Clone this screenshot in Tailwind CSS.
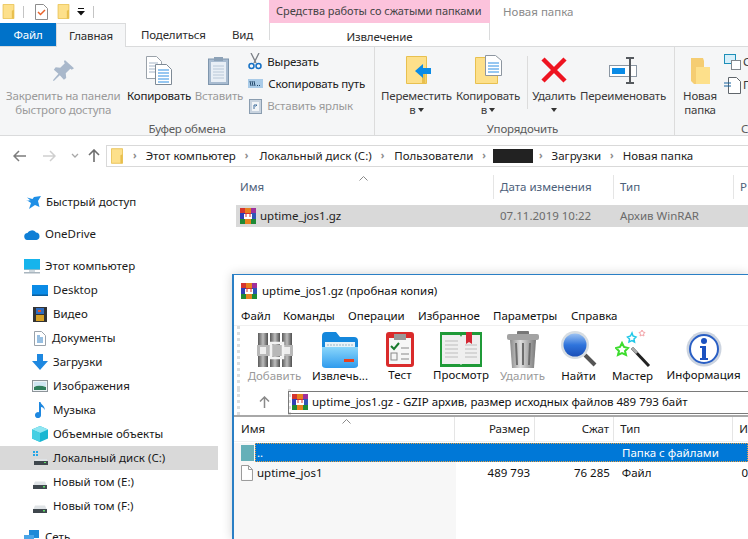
<!DOCTYPE html>
<html lang="ru">
<head>
<meta charset="UTF-8">
<title>Новая папка</title>
<script src="https://cdn.jsdelivr.net/npm/@tailwindcss/browser@4"></script>
</head>
<body class="bg-white">
<svg width="0" height="0" class="absolute">
  <defs>
    <linearGradient id="book" x1="0" x2="1" y1="0" y2="0"><stop offset="0" stop-color="#5a5a5a"/><stop offset=".5" stop-color="#bdbdbd"/><stop offset="1" stop-color="#4e4e4e"/></linearGradient>
    <linearGradient id="blue" x1="0" x2="0" y1="0" y2="1"><stop offset="0" stop-color="#8ad6fb"/><stop offset="1" stop-color="#2f9bed"/></linearGradient>
    <linearGradient id="lens" x1="0" x2="0" y1="0" y2="1"><stop offset="0" stop-color="#9cc2f2"/><stop offset=".5" stop-color="#2f74dc"/><stop offset="1" stop-color="#1a4fb8"/></linearGradient>
    <linearGradient id="can" x1="0" x2="1" y1="0" y2="0"><stop offset="0" stop-color="#8a8a8a"/><stop offset=".4" stop-color="#dedede"/><stop offset="1" stop-color="#7a7a7a"/></linearGradient>
    <symbol id="folder" viewBox="0 0 14 18"><path d="M.5.5h13v17H.5z" fill="#fde08b" stroke="#e8c04f"/><path d="M11 8l2.500-1v10.500H11z" fill="#e8bf4d"/></symbol>
    <symbol id="rar" viewBox="0 0 16 16">
      <rect width="5" height="5" fill="#d6352f"/><rect x="5" width="6" height="5" fill="#e8811f"/><rect x="11" width="5" height="5" fill="#a02f9a"/>
      <rect y="5" width="5" height="6" fill="#2f3fb5"/><rect x="5" y="5" width="6" height="6" fill="#d8322e"/><rect x="11" y="5" width="5" height="6" fill="#2f55b5"/>
      <path d="M4 6h1.500v3h1V6h3v3h1V6H12v5H4z" fill="#fff"/>
      <rect y="11" width="5" height="5" fill="#1f8a35"/><rect x="5" y="11" width="6" height="5" fill="#e8811f"/><rect x="11" y="11" width="5" height="5" fill="#1f8a35"/>
    </symbol>
    <symbol id="drive" viewBox="0 0 14 8"><path d="M2 .5h10L14 5v3H0V5z" fill="#dfe3e6"/><rect y="4" width="14" height="4" fill="#3f474d"/><rect x="10" y="5" width="2" height="1.500" fill="#5fe06a"/></symbol>
  </defs>
</svg>

<div class="relative w-[748px] h-[539px] overflow-hidden bg-white font-['Noto_Sans',sans-serif] text-[11.5px] text-[#1f1f1f]">

  <!-- quick access bar -->
  <div class="flex h-[23px]">
    <div class="flex items-center w-[269px] pl-[2px]">
      <svg class="w-[13px] h-[15px]"><use href="#folder"/></svg>
      <div class="ml-[8px] w-px h-[12px] bg-[#c4c4c4]"></div>
      <svg class="ml-[11px] w-[13px] h-[16px]" viewBox="0 0 13 16"><path d="M.5.500h8l4 4v11H.5z" fill="#fff" stroke="#8d8d8d"/><path d="M3 8l2.500 2.500L10 6" fill="none" stroke="#e8622a" stroke-width="1.500"/></svg>
      <svg class="ml-[9px] w-[13px] h-[15px]"><use href="#folder"/></svg>
      <svg class="ml-[7px] w-[8px] h-[8px]" viewBox="0 0 8 8"><path d="M1 0h6v1H1zM0 3h8L4 7.500z" fill="#111"/></svg>
      <div class="ml-[8px] w-px h-[12px] bg-[#c4c4c4]"></div>
    </div>
    <div class="w-[221px] h-full bg-[#fcc3dc] pl-[7px] flex items-center text-[#444] whitespace-nowrap text-[11px] tracking-[-0.03px]">Средства работы со сжатыми папками</div>
    <div class="pl-[13px] flex items-center text-[#8a8a8a]">Новая папка</div>
  </div>

  <!-- ribbon tabs -->
  <div class="flex h-[23px] text-[#2c2c2c] tracking-[-0.15px]">
    <div class="w-[56px] bg-[#0072c9] text-white flex items-center justify-center">Файл</div>
    <div class="w-[70px] h-[24px] bg-[#f5f6f7] border border-b-0 border-[#dadbdc] flex items-center justify-center z-10">Главная</div>
    <div class="pl-[15px] w-[106px] flex items-center">Поделиться</div>
    <div class="w-[37px] flex items-center">Вид</div>
    <div class="w-[221px] h-[17px] border-x border-[#dadbdc] flex items-center justify-center pt-[11px]">Извлечение</div>
  </div>

  <!-- ribbon -->
  <div class="flex h-[90px] bg-[#f5f6f7] border-y border-[#dadbdc] text-[#3a3a3a] tracking-[-0.2px]">
    <div class="w-[375px] border-r border-[#dcdcdc] flex flex-col">
      <div class="flex h-[75px]">
        <div class="w-[127px] flex flex-col items-center text-[#9a9a9a] leading-[14px]">
          <svg class="mt-[13px] w-[22px] h-[22px] mb-[7px]" viewBox="0 0 24 24"><path d="M14 0l10 9-2.500 1.500-1.500-1-5 5 .5 5-2.500 2-4.500-5L2 23l-1-1 6-7-5-4.500 2-2.500 5 .5 5-5-1-1.500z" fill="#a9b8cb"/></svg>
          <div class="text-center">Закрепить на панели<br>быстрого доступа</div>
        </div>
        <div class="w-[65px] flex flex-col items-center leading-[14px] text-[#202020]">
          <svg class="mt-[9px] w-[26px] h-[29px] mb-[4px]" viewBox="0 0 26 29"><path d="M.5.500h10l5 5v17H.5z" fill="#fff" stroke="#9aa2aa"/><path d="M3 7h9M3 10h9M3 13h9M3 16h9" stroke="#a5b5c8"/><path d="M9.500 8.500h11l5 5v15h-16z" fill="#fff" stroke="#7e8a96"/><path d="M12 14h11M12 17h11M12 20h11M12 23h11M12 26h11" stroke="#2f8fe3" stroke-width="1.200"/></svg>
          <div>Копировать</div>
        </div>
        <div class="w-[52px] flex flex-col items-center leading-[14px] text-[#9a9a9a] pl-[3px]">
          <svg class="mt-[9px] w-[21px] h-[29px] mb-[4px]" viewBox="0 0 21 29"><rect x=".5" y="3" width="20" height="25.500" fill="#a8bbd0" stroke="#7f96ad"/><rect x="3" y="6" width="15" height="20" fill="#e9eff6"/><path d="M5 10h11M5 13h11M5 16h11M5 19h11M5 22h11" stroke="#b9c8d8"/><rect x="6" y="1" width="9" height="4" fill="#8da2b7"/></svg>
          <div>Вставить</div>
        </div>
        <div class="pl-[5px] pt-[7px] flex flex-col gap-[7px] leading-[15px] w-[131px]">
          <div class="flex items-center gap-[5px] h-[15px] text-[#202020]">
            <svg class="w-[14px] h-[17px]" viewBox="0 0 14 17"><path d="M3 0l5 10M11 0L6 10" stroke="#7a7f85" stroke-width="1.300"/><circle cx="3.500" cy="13" r="2.500" fill="none" stroke="#1470c4" stroke-width="1.500"/><circle cx="10.500" cy="13" r="2.500" fill="none" stroke="#1470c4" stroke-width="1.500"/></svg>
            Вырезать</div>
          <div class="flex items-center gap-[5px] h-[15px] text-[#202020]">
            <svg class="w-[15px] h-[9px]" viewBox="0 0 15 9"><rect width="15" height="9" fill="#a9cbe8"/><path d="M2 2l1 5M4 2l1 5M6 2l1 5" stroke="#24496b"/><path d="M9 6.500h1M11 6.500h1" stroke="#24496b"/></svg>
            Скопировать путь</div>
          <div class="flex items-center gap-[5px] h-[15px] text-[#9a9a9a] pl-px">
            <svg class="w-[13px] h-[16px]" viewBox="0 0 13 16"><rect x=".5" y="1.500" width="12" height="14" fill="#c8d3df" stroke="#8a9db0"/><rect x="3" y="4" width="7" height="9" fill="#f1f4f7"/><path d="M5 11V7h3L6.500 8.500" fill="none" stroke="#3e6d9c"/></svg>
            Вставить ярлык</div>
        </div>
      </div>
      <div class="text-center text-[#5b5b5b] leading-[13px]">Буфер обмена</div>
    </div>

    <div class="w-[300px] border-r border-[#dcdcdc] flex flex-col">
      <div class="flex h-[75px] leading-[14px]">
        <div class="ml-[6px] w-[71px] flex flex-col items-center">
          <svg class="mt-[9px] ml-[4px] w-[26px] h-[28px] mb-[5px]" viewBox="0 0 26 28"><path d="M.5.500h20v27H.5z" fill="#fde08b" stroke="#e8c04f"/><path d="M16 17l3.500-1v11H16z" fill="#e8bf4d"/><path d="M9 15l8-7v4h8v6h-8v4z" fill="#0a8be6"/></svg>
          <div>Переместить</div>
          <div class="flex items-center gap-[2px]">в <span class="w-0 h-0 border-x-[3px] border-t-[4px] border-x-transparent border-t-[#333]"></span></div>
        </div>
        <div class="ml-[4px] w-[64px] flex flex-col items-center">
          <svg class="mt-[8px] w-[27px] h-[29px] mb-[5px]" viewBox="0 0 27 29"><path d="M.5 2.500h22v26H.5z" fill="#fde08b" stroke="#e8c04f"/><path d="M10.500.500h10l6 5v15h-16z" fill="#fff" stroke="#8d96a0"/><path d="M13 8h11M13 11h11M13 14h11M13 17h11" stroke="#2f8fe3"/></svg>
          <div>Копировать</div>
          <div class="flex items-center gap-[2px]">в <span class="w-0 h-0 border-x-[3px] border-t-[4px] border-x-transparent border-t-[#333]"></span></div>
        </div>
        <div class="w-px h-[53px] mt-[9px] bg-[#dcdcdc] ml-[7px]"></div>
        <div class="w-[52px] flex flex-col items-center">
          <svg class="mt-[10px] w-[26px] h-[26px] mb-[6px]" viewBox="0 0 26 26"><path d="M2 2l22 22M24 2L2 24" stroke="#ee1420" stroke-width="4.500"/></svg>
          <div>Удалить</div>
          <span class="mt-[5px] w-0 h-0 border-x-[3px] border-t-[4px] border-x-transparent border-t-[#333]"></span>
        </div>
        <div class="w-[86px] flex flex-col items-center">
          <svg class="mt-[10px] w-[28px] h-[27px] mb-[5px]" viewBox="0 0 28 27"><rect x=".5" y="8.500" width="27" height="11" fill="#fff" stroke="#8a96a3"/><rect x="3" y="11" width="13" height="6" fill="#0a8be6"/><path d="M17 1h8M17 26h8M21 1v25" fill="none" stroke="#55595e" stroke-width="2"/></svg>
          <div>Переименовать</div>
        </div>
      </div>
      <div class="text-center text-[#5b5b5b] leading-[13px] pr-[4px]">Упорядочить</div>
    </div>

    <div class="flex-1 flex flex-col overflow-hidden">
      <div class="flex h-[75px] leading-[14px]">
        <div class="ml-[8px] w-[34px] flex flex-col items-center">
          <svg class="mt-[10px] w-[19px] h-[27px] mb-[5px]" viewBox="0 0 19 27"><path d="M0 1h12l1 3v23H3L0 24z" fill="#f5cd72"/><path d="M5 10h14v17H5z" fill="#fde08b"/></svg>
          <div class="text-center">Новая<br>папка</div>
        </div>
        <div class="ml-[7px] pt-[7px] flex flex-col gap-[8px]">
          <div class="flex items-center gap-[2px] h-[15px]">
            <svg class="w-[17px] h-[16px] shrink-0" viewBox="0 0 17 16"><rect x=".5" y=".5" width="11" height="9" fill="#d6effa" stroke="#1d8fb8"/><rect x="7.500" y="6.500" width="9" height="9" fill="#fff" stroke="#80868c"/></svg><span class="w-[5px] overflow-hidden">С</span>
          </div>
          <div class="flex items-center gap-[2px] h-[15px]">
            <svg class="w-[17px] h-[18px] shrink-0" viewBox="0 0 17 18"><path d="M4.500 1.500h8l4 4v12h-12z" fill="#fff" stroke="#60666c"/><path d="M0 7h7M0 10h7" stroke="#17629e"/></svg><span class="w-[5px] overflow-hidden">П</span>
          </div>
        </div>
      </div>
      <div class="pl-[66px] text-[#5b5b5b] leading-[13px]">С</div>
    </div>
  </div>

  <!-- address bar -->
  <div class="flex items-center h-[39px]">
    <div class="w-[106px] flex items-center pl-[13px] text-[#8a8a8a]">
      <svg class="w-[13px] h-[12px]" viewBox="0 0 13 12"><path d="M6 1L1 6l5 5M1 6h12" fill="none" stroke="#7c7c7c" stroke-width="1.500"/></svg>
      <svg class="ml-[17px] w-[13px] h-[12px]" viewBox="0 0 13 12"><path d="M7 1l5 5-5 5M12 6H0" fill="none" stroke="#cfcfcf" stroke-width="1.500"/></svg>
      <svg class="ml-[15px] w-[8px] h-[5px]" viewBox="0 0 8 5"><path d="M1 1l3 3 3-3" fill="none" stroke="#a8a8a8" stroke-width="1.300"/></svg>
      <svg class="ml-[9px] w-[12px] h-[13px]" viewBox="0 0 12 13"><path d="M1 6l5-5 5 5M6 1v12" fill="none" stroke="#6e6e6e" stroke-width="1.600"/></svg>
    </div>
    <div class="flex-1 h-[22px] border border-r-0 border-[#d9d9d9] flex items-center pl-[4px] text-[#222] whitespace-nowrap">
      <svg class="w-[12px] h-[16px]"><use href="#folder"/></svg>
      <span class="ml-[10px] mr-[9px] text-[#8a8a8a] text-[10px] font-bold">›</span>Этот компьютер
      <span class="ml-[9px] mr-[11px] text-[#8a8a8a] text-[10px] font-bold">›</span>Локальный диск (C:)
      <span class="ml-[9px] mr-[10px] text-[#8a8a8a] text-[10px] font-bold">›</span>Пользователи
      <span class="ml-[9px] mr-[7px] text-[#8a8a8a] text-[10px] font-bold">›</span>
      <span class="w-[40px] h-[14px] bg-[#222]"></span>
      <span class="ml-[6px] mr-[9px] text-[#8a8a8a] text-[10px] font-bold">›</span>Загрузки
      <span class="ml-[9px] mr-[9px] text-[#8a8a8a] text-[10px] font-bold">›</span>Новая папка
    </div>
  </div>

  <!-- main -->
  <div class="flex">
    <!-- navigation pane -->
    <div class="w-[220px] pt-[15px] text-[#1a1a1a] leading-[24px]">
      <div class="flex items-center h-[24px] pl-[26px] gap-[5px]">
        <svg class="w-[15px] h-[14px]" viewBox="0 0 15 14"><path d="M8 2L15 1l-3 5 1.500 6L9 10l-6 4 2-6-3-2h3L0 5h4L1 2.500 6.500 4z" fill="#1f8fe6"/></svg>Быстрый доступ</div>
      <div class="flex items-center h-[24px] mt-[8px] pl-[24px] gap-[5px]">
        <svg class="w-[16px] h-[11px]" viewBox="0 0 16 11"><path d="M4 11a3.500 3.500 0 0 1-.5-7A5 5 0 0 1 12 3.500 3.800 3.800 0 0 1 12.500 11z" fill="#0f7fd6"/></svg>OneDrive</div>
      <div class="flex items-center h-[24px] mt-[8px] pl-[24px] gap-[5px]">
        <svg class="w-[16px] h-[15px]" viewBox="0 0 16 15"><rect width="16" height="10" fill="#16b4ec"/><rect y="10" width="16" height="1" fill="#7ab8cf"/><rect x="5" y="11" width="6" height="2" fill="#cfd8de"/><rect x="0" y="13" width="16" height="1.500" fill="#a9b6bf"/></svg>Этот компьютер</div>
      <div class="flex items-center h-[24px] pl-[32px] gap-[5px]">
        <svg class="w-[16px] h-[11px]" viewBox="0 0 16 11"><rect width="16" height="11" fill="#0a8be6"/><rect y="9.500" width="16" height="1.500" fill="#0b5f9e"/></svg>Desktop</div>
      <div class="flex items-center h-[24px] pl-[33px] gap-[6px]">
        <svg class="w-[14px] h-[15px]" viewBox="0 0 14 15"><rect width="14" height="15" fill="#333"/><rect x="3" y="1" width="8" height="6" fill="#2f6cc0"/><rect x="3" y="8" width="8" height="6" fill="#d6a024"/><rect x="5" y="3" width="3" height="2" fill="#e5542a"/></svg>Видео</div>
      <div class="flex items-center h-[24px] pl-[34px] gap-[6px]">
        <svg class="w-[12px] h-[15px]" viewBox="0 0 12 15"><path d="M.5.500h7l4 4v10H.5z" fill="#fff" stroke="#9aa2aa"/><path d="M3 5h3M3 7h6M3 9h6M3 11h6" stroke="#2f7fc4"/></svg>Документы</div>
      <div class="flex items-center h-[24px] pl-[32px] gap-[5px]">
        <svg class="w-[16px] h-[16px]" viewBox="0 0 16 16"><path d="M5 0h6v7h5l-8 9-8-9h5z" fill="#1e88e0"/></svg>Загрузки</div>
      <div class="flex items-center h-[24px] pl-[32px] gap-[5px]">
        <svg class="w-[16px] h-[12px]" viewBox="0 0 16 12"><rect x=".5" y=".5" width="15" height="11" fill="#eef3f6" stroke="#8d9499"/><rect x="2" y="2" width="12" height="4" fill="#cfe6f2"/><path d="M2 7c4-2 8-1 12 0v3H2z" fill="#2f7d5c"/></svg>Изображения</div>
      <div class="flex items-center h-[24px] pl-[34px] gap-[7px]">
        <svg class="w-[12px] h-[16px]" viewBox="0 0 12 16"><path d="M5 0h1.500c.5 3 5 4 4 8-.5-2-2-3-3.500-3v8a3 3 0 1 1-2-2.700z" fill="#1e88e0"/></svg>Музыка</div>
      <div class="flex items-center h-[24px] pl-[32px] gap-[5px]">
        <svg class="w-[16px] h-[16px]" viewBox="0 0 16 16"><path d="M8 0l8 3.500v9L8 16l-8-3.500v-9z" fill="#18b6d2"/><path d="M8 0l8 3.500L8 7 0 3.500z" fill="#8fe6f2"/><path d="M0 3.500L8 7v9l-8-3.500z" fill="#46cfe3"/></svg>Объемные объекты</div>
      <div class="flex items-center h-[24px] w-[218px] bg-[#d9d9d9] pl-[32px] gap-[5px]">
        <svg class="w-[16px] h-[16px]" viewBox="0 0 16 16"><path d="M1 1h2v2H1zM4 1h2v2H4zM1 4h2v2H1zM4 4h2v2H4z" fill="#25a5e6"/><rect x="2" y="11" width="14" height="4" fill="#3f474d"/><rect x="3" y="9" width="12" height="2" fill="#dfe3e6"/><rect x="12" y="12" width="2" height="1" fill="#5fe06a"/></svg>Локальный диск (C:)</div>
      <div class="flex items-center h-[24px] pl-[33px] gap-[6px]">
        <svg class="w-[14px] h-[8px] mt-[6px]"><use href="#drive"/></svg>Новый том (E:)</div>
      <div class="flex items-center h-[24px] pl-[33px] gap-[6px]">
        <svg class="w-[14px] h-[8px] mt-[6px]"><use href="#drive"/></svg>Новый том (F:)</div>
      <div class="flex items-center h-[24px] mt-[7px] pl-[24px] gap-[5px]">
        <svg class="w-[16px] h-[14px]" viewBox="0 0 16 14"><rect x="5" width="10" height="8" fill="#1f8ad8"/><rect y="5" width="10" height="8" fill="#4aa5e8"/></svg>Сеть</div>
    </div>

    <!-- file list -->
    <div class="relative flex-1 pl-[16px]">
      <svg class="absolute left-[139px] top-[1px] w-[9px] h-[5px]" viewBox="0 0 9 5"><path d="M.5 4.500l4-4 4 4" fill="none" stroke="#8a8a8a"/></svg>
      <div class="flex h-[30px] text-[#4c607a] items-start">
        <div class="w-[257px] pl-[4px] pt-[3px]">Имя</div>
        <div class="w-[120px] h-[24px] border-l border-[#e5e5e5] pl-[6px] pt-[3px]">Дата изменения</div>
        <div class="w-[120px] h-[24px] border-l border-[#e5e5e5] pl-[6px] pt-[3px]">Тип</div>
        <div class="h-[24px] border-l border-[#e5e5e5] pl-[6px] pt-[3px]">Р</div>
      </div>
      <div class="flex h-[22px] bg-[#d9d9d9] items-center text-[#6b6b6b]">
        <div class="w-[257px] pl-[4px] flex items-center gap-[4px] text-[#222]">
          <svg class="w-[16px] h-[16px]"><use href="#rar"/></svg>uptime_jos1.gz</div>
        <div class="w-[120px] pl-[7px]">07.11.2019 10:22</div>
        <div class="pl-[7px]">Архив WinRAR</div>
      </div>
    </div>
  </div>

  <!-- WinRAR window over explorer -->
  <div class="absolute left-[232px] top-[274px] right-0 bottom-0 bg-white border-l-2 border-t border-[#2a7fc5] shadow-[0_0_10px_rgba(0,0,0,0.18)] text-[#111]">
    <div class="flex items-center h-[31px] pl-[7px] gap-[5px]">
      <svg class="w-[16px] h-[16px]"><use href="#rar"/></svg>uptime_jos1.gz (пробная копия)
    </div>
    <div class="flex items-center h-[20px] pl-[7px] border-b border-[#f0f0f0]">
      <span class="w-[42px]">Файл</span><span class="w-[65px]">Команды</span><span class="w-[70px]">Операции</span><span class="w-[75px]">Избранное</span><span class="w-[78px]">Параметры</span><span>Справка</span>
    </div>
    <!-- toolbar -->
    <div class="flex h-[63px] pl-[8px] text-center border-l-[3px] border-dotted border-[#ddd] ml-[3px] whitespace-nowrap">
      <div class="w-[53px] flex flex-col items-center text-[#9a9a9a]">
        <svg class="mt-[6px] mb-[-1px] w-[36px] h-[36px]" viewBox="0 0 36 36"><rect x="1" y="1" width="10" height="34" fill="url(#book)"/><rect x="13" y="1" width="10" height="34" fill="url(#book)"/><rect x="25" y="1" width="10" height="34" fill="url(#book)"/><rect y="13" width="36" height="11" fill="#b8b8b8"/><path d="M3 15h6v7H3zM27 15h6v7h-6z" fill="#eee"/><rect x="14" y="11" width="12" height="15" fill="none" stroke="#f2f2f2" stroke-width="2.500"/></svg>
        <span>Добавить</span></div>
      <div class="ml-[12px] w-[54px] flex flex-col items-center">
        <svg class="mt-[5px] mb-[-1px] w-[36px] h-[37px]" viewBox="0 0 36 37"><path d="M0 5q0-4 4-4h10l4 5h14q4 0 4 4v23q0 3-4 3H4q-4 0-4-4z" fill="#1487dc"/><path d="M3 11h30v8H3z" fill="#e8f2f8"/><path d="M5 14h26" stroke="#9ab4c4" stroke-dasharray="2 1"/><path d="M0 16h36v18q0 3-4 3H4q-4 0-4-3z" fill="url(#blue)"/><rect x="22" y="28" width="10" height="3" fill="#e8401f"/></svg>
        <span>Извлечь...</span></div>
      <div class="ml-[8px] w-[50px] flex flex-col items-center">
        <svg class="mt-[6px] mb-[-1px] w-[28px] h-[35px]" viewBox="0 0 28 35"><rect width="28" height="35" rx="3" fill="#d92b2b"/><rect x="3" y="6" width="22" height="26" fill="#f6f6f6"/><rect x="8" y="2" width="12" height="6" fill="#999"/><path d="M5 14l3 3 5-6" fill="none" stroke="#197a2d" stroke-width="2"/><path d="M15 16h8M15 22h8M15 27h8" stroke="#888"/><rect x="5" y="21" width="6" height="7" fill="none" stroke="#888"/></svg>
        <span>Тест</span></div>
      <div class="ml-[5px] w-[62px] flex flex-col items-center">
        <svg class="mt-[6px] mb-[-1px] w-[42px] h-[35px]" viewBox="0 0 42 35"><rect width="42" height="35" fill="#1f9a38"/><path d="M2 3h18l1 2 1-2h18v29H22l-1 1-1-1H2z" fill="#efefef"/><path d="M5 9h13M5 13h13M5 17h13M5 21h13M5 25h13M25 13h12M25 17h12M25 21h12M25 25h12" stroke="#bdbdbd"/><path d="M26 0h6v12l-3-2-3 2z" fill="#d32733"/></svg>
        <span>Просмотр</span></div>
      <div class="w-[61px] flex flex-col items-center text-[#9a9a9a]">
        <svg class="mt-[5px] mb-[-1px] w-[32px] h-[37px]" viewBox="0 0 32 37"><rect x="10" y="0" width="12" height="4" rx="1" fill="#777"/><rect y="3" width="32" height="6" rx="2" fill="#a3a3a3"/><path d="M3 9h26l-2 28H5z" fill="url(#can)"/><path d="M9 12l1 22M16 12v22M23 12l-1 22" stroke="#6d6d6d" stroke-width="2"/></svg>
        <span>Удалить</span></div>
      <div class="w-[51px] flex flex-col items-center">
        <svg class="mt-[4px] mb-[-1px] w-[37px] h-[38px]" viewBox="0 0 37 38"><path d="M25 25l10 10" stroke="#555" stroke-width="4"/><circle cx="15" cy="15" r="14" fill="#d7dde2"/><circle cx="15" cy="15" r="11.500" fill="url(#lens)"/></svg>
        <span>Найти</span></div>
      <div class="w-[57px] flex flex-col items-center">
        <svg class="mt-[4px] mb-[-1px] w-[36px] h-[38px]" viewBox="0 0 36 38"><path d="M17 18l17 18" stroke="#222" stroke-width="3"/><path d="M17 18l5 5" stroke="#aaa" stroke-width="3"/><path d="M7 13l2 4 4 1-3 3 1 4-4-2-4 2 1-4-3-3 4-1z" fill="none" stroke="#3ddc2e" stroke-width="2"/><path d="M17 3l1 3 3 1-2 2 .5 3-2.500-1.500L14 12l.5-3-2-2 3-1z" fill="none" stroke="#22c8e8" stroke-width="1.500"/><path d="M27 0l1 2 2 .500-1.500 1.500.5 2-2-1-2 1 .5-2L24 2.500 26 2z" fill="none" stroke="#f3a3a8"/></svg>
        <span>Мастер</span></div>
      <div class="ml-[3px] w-[79px] flex flex-col items-center">
        <svg class="mt-[5px] mb-[-1px] w-[36px] h-[36px]" viewBox="0 0 36 36"><circle cx="18" cy="18" r="17.500" fill="#ccd4e0"/><circle cx="18" cy="18" r="14" fill="#fff" stroke="#2a5fc4" stroke-width="2"/><circle cx="18" cy="10" r="3" fill="#1c52c0"/><path d="M14 15h6v12h2v2h-8v-2h2V17h-2z" fill="#1c52c0"/></svg>
        <span>Информация</span></div>
    </div>
    <!-- archive path -->
    <div class="flex items-center h-[28px] border-b-2 border-[#a8a8a8]">
      <div class="w-[54px] h-[26px] flex items-center justify-center border-x-[3px] border-dotted border-x-[#ddd] ml-[3px]">
        <svg class="w-[11px] h-[12px]" viewBox="0 0 11 12"><path d="M1 5.500l4.500-4.500L10 5.500M5.500 1v11" fill="none" stroke="#8a8a8a" stroke-width="1.500"/></svg>
      </div>
      <div class="flex-1 h-[23px] ml-[-3px] border border-r-0 border-[#7a7a7a] flex items-center pl-[3px] gap-[4px]">
        <svg class="w-[16px] h-[16px]"><use href="#rar"/></svg>uptime_jos1.gz - GZIP архив, размер исходных файлов 489 793 байт
      </div>
    </div>
    <!-- list header -->
    <div class="relative flex h-[25px] items-center text-[#222] border-b border-[#f0f0f0]">
      <svg class="absolute left-[108px] top-[2px] w-[9px] h-[5px]" viewBox="0 0 9 5"><path d="M.5 4.500l4-4 4 4" fill="none" stroke="#8a8a8a"/></svg>
      <div class="w-[222px] h-full flex items-center pl-[7px]">Имя</div>
      <div class="w-[80px] h-full flex items-center justify-end pr-[4px] border-l border-[#e5e5e5]">Размер</div>
      <div class="w-[80px] h-full flex items-center justify-end pr-[4px] border-l border-[#e5e5e5]">Сжат</div>
      <div class="w-[120px] h-full flex items-center pl-[6px] border-l border-[#e5e5e5]">Тип</div>
      <div class="h-full flex items-center pl-[6px] border-l border-[#e5e5e5]">И</div>
    </div>
    <!-- rows -->
    <div class="relative h-[100px]">
      <div class="absolute left-0 top-0 bottom-0 w-[222px] bg-[#f7f7f7]"></div>
      <div class="relative flex h-[19px] mt-px items-center pl-[7px]">
        <div class="w-[13px] h-[16px] bg-[#66b0b8]"></div>
        <div class="flex-1 h-[19px] ml-[1px] bg-[#0078d7] outline-1 outline-dotted outline-[#e8a040] -outline-offset-1 flex items-center text-white">
          <span class="pl-[2px] w-[367px]">..</span><span>Папка с файлами</span>
        </div>
      </div>
      <div class="relative flex h-[18px] mt-[2px] items-center pl-[7px]">
        <svg class="w-[12px] h-[16px]" viewBox="0 0 12 16"><path d="M.5.500h7l4 4v11H.5z" fill="#fff" stroke="#9a9a9a"/><path d="M7.500.500v4h4" fill="none" stroke="#9a9a9a"/></svg>
        <span class="pl-[4px] w-[203px]">uptime_jos1</span>
        <span class="w-[80px] text-right pr-[5px]">489 793</span>
        <span class="w-[80px] text-right pr-[5px]">76 285</span>
        <span class="w-[120px] pl-[7px]">Файл</span>
        <span class="pl-[7px]">0</span>
      </div>
    </div>
  </div>
</div>
</body>
</html>
